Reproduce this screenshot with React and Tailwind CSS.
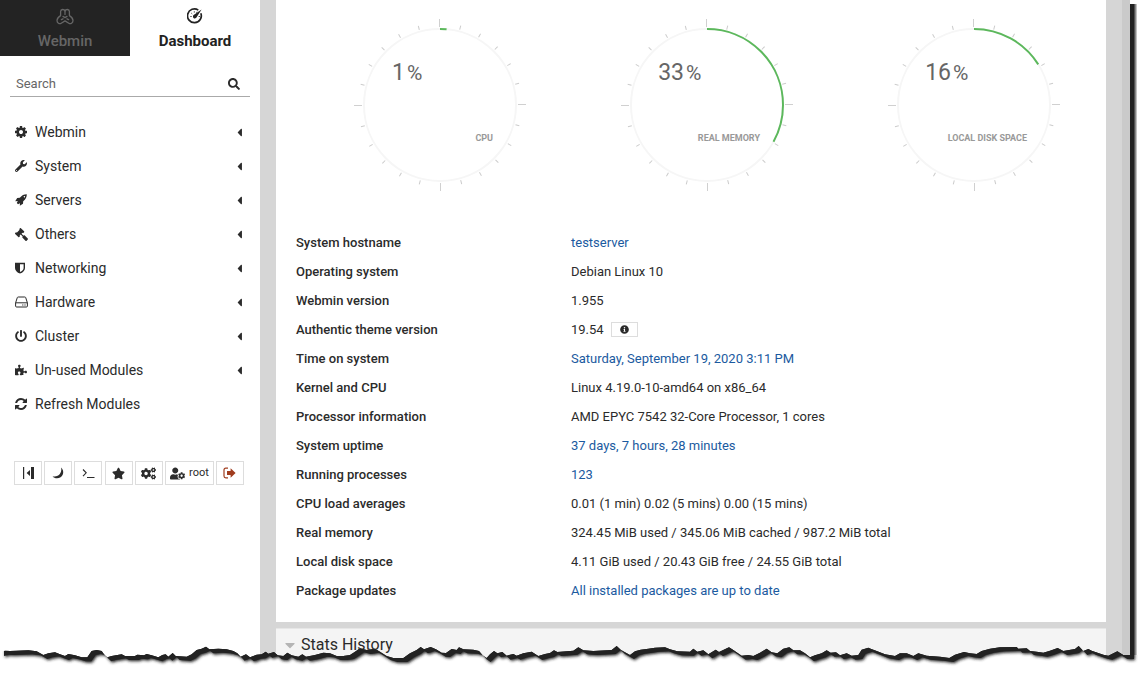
import React, { useState } from 'react';
import {
  FaCogs, FaWrench, FaPowerOff, FaPuzzlePiece, FaSearch, FaGavel,
  FaStar, FaUserCog, FaInfoCircle, FaCaretLeft, FaCaretDown,
} from 'react-icons/fa';

const menu = [
  { label: 'Webmin', icon: CogIcon },
  { label: 'System', icon: FaWrench },
  { label: 'Servers', icon: RocketIcon },
  { label: 'Others', icon: HammerIcon },
  { label: 'Networking', icon: ShieldIcon },
  { label: 'Hardware', icon: DriveIcon },
  { label: 'Cluster', icon: FaPowerOff },
  { label: 'Un-used Modules', icon: FaPuzzlePiece },
];

const info = [
  { label: 'System hostname', value: 'testserver', link: true },
  { label: 'Operating system', value: 'Debian Linux 10' },
  { label: 'Webmin version', value: '1.955' },
  { label: 'Authentic theme version', value: '19.54', details: true },
  { label: 'Time on system', value: 'Saturday, September 19, 2020 3:11 PM', link: true },
  { label: 'Kernel and CPU', value: 'Linux 4.19.0-10-amd64 on x86_64' },
  { label: 'Processor information', value: 'AMD EPYC 7542 32-Core Processor, 1 cores' },
  { label: 'System uptime', value: '37 days, 7 hours, 28 minutes', link: true },
  { label: 'Running processes', value: '123', link: true },
  { label: 'CPU load averages', value: '0.01 (1 min) 0.02 (5 mins) 0.00 (15 mins)' },
  { label: 'Real memory', value: '324.45 MiB used / 345.06 MiB cached / 987.2 MiB total' },
  { label: 'Local disk space', value: '4.11 GiB used / 20.43 GiB free / 24.55 GiB total' },
  { label: 'Package updates', value: 'All installed packages are up to date', link: true },
];

// outline of the ragged bottom edge of the page
const EDGE =
  '0,156 15,152 30,153 50,152 85,151 110,154 130,165 145,160 165,157 180,163 195,168 205,162 225,166 245,172 262,172 275,153 290,150 305,153 312,163 322,172 335,168 365,163 375,168 405,168 412,164 432,166 440,162 455,166 475,172 487,165 497,163 505,170 518,159 527,168 560,170 575,163 590,150 605,146 618,140 628,148 655,146 680,148 700,153 712,160 722,170 738,163 750,172 770,164 785,163 797,155 805,161 822,156 833,166 850,168 862,158 875,166 895,170 907,163 918,170 945,165 970,158 990,160 1010,168 1030,168 1050,165 1065,155 1080,145 1100,150 1125,146 ' +
  '1140,155 1160,168 1180,174 1210,174 1230,160 1250,150 1262,141 1272,148 1292,141 1308,148 1325,158 1338,159 1355,147 1370,150 1377,142 1390,148 1420,149 1437,153 1448,166 1460,174 1470,163 1482,153 1492,160 1507,156 1520,167 1540,162 1550,167 1570,160 1595,155 1615,168 1635,162 1650,159 1662,151 1672,156 1720,152 1735,142 1750,151 1780,153 1835,150 1850,138 1862,149 1875,157 1890,165 1905,154 1922,149 1945,146 1965,143 1995,142 2010,148 2032,154 2070,155 2080,146 2092,155 2110,151 2125,163 2147,149 2157,156 2187,142 2200,150 2225,167 2245,165 2260,168 ' +
  '2280,158 2300,146 2315,157 2332,160 2350,146 2368,142 2380,151 2400,151 2415,160 2430,172 2445,166 2465,160 2480,151 2492,158 2508,157 2520,166 2540,160 2555,167 2575,165 2585,149 2605,143 2612,146 2630,153 2655,163 2685,168 2700,160 2720,160 2740,168 2755,160 2780,167 2820,170 2848,174 2865,164 2892,156 2910,160 2930,162 2945,153 2970,146 3000,142 3050,141 3055,146 3080,145 3090,153 3110,155 3130,158 3150,152 3173,144 3190,153 3225,147 3236,138 3250,153 3265,147 3275,152 3310,164 3325,167 3352,154 3370,165 3390,165';

function WebminLogo() {
  return (
    <svg width="18" height="18" viewBox="0 0 18 18" fill="none" stroke="currentColor" strokeWidth="1.3" strokeLinejoin="round" strokeLinecap="round">
      <path d="M9 3C8.400 1 4.700 .8 4.600 3.600V7.600C2.600 8.800 1 10.200 1 12.400C1 15 3.400 16.400 5.200 15.200L9 12.900L12.800 15.200C14.600 16.400 17 15 17 12.400C17 10.200 15.400 8.800 13.400 7.600V3.600C13.300 .8 9.600 1 9 3Z" />
      <path d="M9 3V6.400M7 8.400L9 9.600L11 8.400M5.400 11.600L7 10.800M12.600 11.600L11 10.800" />
    </svg>
  );
}

function GaugeIcon() {
  return (
    <svg width="16" height="16" viewBox="0 0 16 16" fill="none" stroke="currentColor">
      <path d="M13.8 5.2A6.9 6.9 0 1 1 11.3 2.1" strokeWidth="1.7" />
      <path d="M14.6 1.6L9.6 9.2A1.9 1.9 0 1 1 7 6.8Z" fill="currentColor" stroke="none" />
      <path d="M3.4 8.5H4.6M4.4 5.2L5.2 5.9M7.3 3.4V4.5M10 3.8L9.6 4.7M11.7 8.5H12.8" strokeWidth="1" />
    </svg>
  );
}

function CogIcon() {
  return (
    <svg width="12" height="12" viewBox="0 128 1536 1536" fill="currentColor">
      <path d="M1024 896q0-106-75-181t-181-75-181 75-75 181 75 181 181 75 181-75 75-181zm512-109v222q0 12-8 23t-20 13l-185 28q-19 54-39 91 35 50 107 138 10 12 10 25t-9 23q-27 37-99 108t-94 71q-12 0-26-9l-138-108q-44 23-91 38-16 136-29 186-7 28-36 28H657q-14 0-24.500-8.500T621 1634l-28-184q-49-16-90-37l-141 107q-10 9-25 9-14 0-25-11-126-114-165-168-7-10-7-23 0-12 8-23 15-21 51-66.500t54-70.500q-27-50-41-99l-183-27q-13-2-21-12.500T0 1005V783q0-12 8-23t19-13l186-28q14-46 39-92-40-57-107-138-10-12-10-24 0-10 9-23 26-36 98.500-107.500T337 263q13 0 26 10l138 107q44-23 91-38 16-136 29-186 7-28 36-28h222q14 0 24.500 8.500T915 158l28 184q49 16 90 37l142-107q9-9 24-9 13 0 25 10 129 119 165 170 7 8 7 22 0 12-8 23-15 21-51 66.500t-54 70.500q26 50 41 98l183 28q13 2 21 12.500t8 23.500z" />
    </svg>
  );
}

function RocketIcon() {
  return (
    <svg width="12" height="12" viewBox="0 0 12 12" fill="currentColor">
      <path fillRule="evenodd" d="M11.800 .2C8.800 .2 7 1.200 4.800 3.800L2.200 4L.2 7.200L2.800 7L1.800 9L3 10.200L5 9.200L4.800 11.800L8 9.800L8.200 7.200C10.800 5 11.800 3.200 11.800 .2ZM9.400 1.900A.7 .7 0 1 1 9.390 1.900Z" />
    </svg>
  );
}

function HammerIcon() {
  return <FaGavel size={13} className="-scale-x-100" />;
}

function ShieldIcon() {
  return (
    <svg width="12" height="12" viewBox="0 0 12 12" fill="currentColor">
      <path fillRule="evenodd" d="M0 0.8H10V6C10 8.6 8 10.500 5 11.6C2 10.500 0 8.6 0 6ZM5 2.2V10C7.300 9 8.600 7.8 8.600 6V2.2Z" />
    </svg>
  );
}

function DriveIcon() {
  return (
    <svg width="13" height="12" viewBox="0 0 13 12" fill="none" stroke="currentColor">
      <path d="M.6 6.8L2.3 1.6Q2.5 1 3.2 1H9.8Q10.5 1 10.7 1.6L12.4 6.8V10Q12.4 11 11.4 11H1.6Q.6 11 .6 10ZM.6 6.8H12.4M7.2 9H8.4M9.4 9H10.6" />
    </svg>
  );
}

function RefreshIcon() {
  return (
    <svg width="12" height="12" viewBox="0 0 1536 1536" fill="currentColor">
      <path d="M1511 928q0 5-1 7-64 268-268 434.500T764 1536q-146 0-282.500-55T238 1324l-129 129q-19 19-45 19t-45-19-19-45V960q0-26 19-45t45-19h448q26 0 45 19t19 45-19 45l-137 137q71 66 161 102t187 36q134 0 250-65t186-179q11-17 53-117 8-23 30-23h192q13 0 22.500 9.500t9.500 22.500zm25-800v448q0 26-19 45t-45 19h-448q-26 0-45-19t-19-45 19-45l138-138Q969 256 768 256q-134 0-250 65T332 500q-11 17-53 117-8 23-30 23H50q-13 0-22.500-9.500T18 608v-7q65-268 270-434.500T768 0q146 0 284 55.500T1297 212l130-129q19-19 45-19t45 19 19 45z" />
    </svg>
  );
}

function CollapseIcon() {
  return (
    <svg width="13" height="12" viewBox="0 0 13 12" fill="currentColor">
      <path d="M1 0H2.2V12H1ZM9 0H12V12H9ZM8 3V9L4.6 6Z" />
    </svg>
  );
}

function TerminalIcon() {
  return (
    <svg width="13" height="12" viewBox="0 0 13 12" fill="none" stroke="currentColor" strokeWidth="1.1">
      <path d="M1 2.5L4.2 5.8L1 9.1M5 10.5H12.5" />
    </svg>
  );
}

function MoonIcon() {
  return (
    <svg width="12" height="12" viewBox="0 0 12 12" fill="currentColor">
      <path d="M9 .6C12.200 3.200 11.800 8 8.600 10.200C5.800 12 2.200 11.400 .6 9.200C3.600 9.800 6.400 9 8 6.800C9.400 4.800 9.600 2.600 9 .6Z" />
    </svg>
  );
}

function LogoutIcon() {
  return (
    <svg width="13" height="12" viewBox="0 0 13 12" fill="currentColor">
      <path d="M5 1.200H2.800Q1 1.200 1 3V9Q1 10.800 2.800 10.800H5" fill="none" stroke="currentColor" strokeWidth="1.200" />
      <path d="M4 4H7.600V1.200L12.600 6L7.600 10.800V8H4Z" />
    </svg>
  );
}

function Gauge({ value, arc = value, label, numberEnd }) {
  const r = 76;
  const circumference = 2 * Math.PI * r;
  const ticks = Array.from({ length: 24 }, (_, i) => i);
  return (
    <svg width="172" height="172" viewBox="-86 -86 172 172" role="img" aria-label={`${label} ${value}%`}>
      {ticks.map((i) => (
        <line
          key={i}
          x1="-0.5"
          x2="-0.5"
          y1={i % 6 === 0 ? -86 : -82}
          y2="-78"
          stroke={i % 6 === 0 ? '#d0d0d0' : '#cccccc'}
          transform={`rotate(${i * 15})`}
        />
      ))}
      <circle r={r} fill="none" stroke="#f6f6f6" strokeWidth="2" />
      <circle
        r={r}
        fill="none"
        stroke="#5cb85c"
        strokeWidth="2"
        strokeDasharray={`${(circumference * arc) / 100} ${circumference}`}
        transform="rotate(-90)"
      />
      <text x={numberEnd} y="-25" textAnchor="end" fontSize="23" fill="#666666">{value}</text>
      <text x={numberEnd + 2} y="-25" fontSize="21" fill="#666666">%</text>
      <text x="53" y="36" textAnchor="end" fontSize="9" fontWeight="700" fill="#999999">{label}</text>
    </svg>
  );
}

function ToolButton({ label, children }) {
  return (
    <button type="button" aria-label={label} className="flex h-6 min-w-7 items-center justify-center gap-1 border border-[#dddddd] bg-white px-1 text-[11px] hover:bg-gray-100">
      {children}
    </button>
  );
}

function Sidebar() {
  const [query, setQuery] = useState('');

  return (
    <aside className="w-[260px] shrink-0 bg-white">
      <div className="grid h-14 grid-cols-2 text-[15px] leading-6">
        <button type="button" className="flex flex-col items-center gap-[3px] bg-[#232323] pt-2 font-medium text-[#666666]">
          <WebminLogo />
          <span>Webmin</span>
        </button>
        <button type="button" className="flex flex-col items-center gap-[3px] pt-2 font-bold text-[#222222]">
          <span className="flex h-[18px] items-start"><GaugeIcon /></span>
          <span>Dashboard</span>
        </button>
      </div>

      <label className="mx-2.5 mt-4 flex h-[25px] items-center border-b border-[#aaaaaa] px-1.5">
        <input
          type="text"
          aria-label="Search"
          placeholder="Search"
          value={query}
          onChange={(e) => setQuery(e.target.value)}
          className="min-w-0 flex-1 text-[13px] outline-none placeholder:text-[#666666]"
        />
        <FaSearch size={12} className="mr-1" />
      </label>

      <nav className="mt-[18px]">
        {menu.map((item) => (
          <a key={item.label} href="#" className="flex h-[34px] items-center pr-3.5 pl-[15px] text-sm hover:bg-gray-100">
            <span className="w-5"><item.icon size={12} /></span>
            <span className="flex-1">{item.label}</span>
            <FaCaretLeft size={13} />
          </a>
        ))}
        <a href="#" className="flex h-[34px] items-center pr-3.5 pl-[15px] text-sm hover:bg-gray-100">
          <span className="w-5"><RefreshIcon /></span>
          <span>Refresh Modules</span>
        </a>
      </nav>

      <div className="mt-10 flex justify-between pr-4 pl-3.5">
        <ToolButton label="Collapse menu"><CollapseIcon /></ToolButton>
        <ToolButton label="Night mode"><MoonIcon /></ToolButton>
        <ToolButton label="Terminal"><TerminalIcon /></ToolButton>
        <ToolButton label="Favorites"><FaStar size={13} /></ToolButton>
        <ToolButton label="Theme settings"><FaCogs size={15} /></ToolButton>
        <ToolButton label="User root"><FaUserCog size={15} /><span>root</span></ToolButton>
        <ToolButton label="Log out"><span className="text-[#a03c1e]"><LogoutIcon /></span></ToolButton>
      </div>
    </aside>
  );
}

export default function App() {
  return (
    <div className="relative flex min-h-screen overflow-hidden bg-white font-[Roboto,sans-serif] text-[#2b2b2b]">
      <Sidebar />

      <main className="flex min-w-0 flex-1 flex-col bg-[#d6d6d6] px-4">
        {/* System information */}
        <section className="bg-white pb-[17px]">
          <div className="flex justify-between pt-[19px] pr-[46px] pl-[78px]">
            <Gauge value={1} arc={1.4} label="CPU" numberEnd={-35} />
            <Gauge value={33} label="REAL MEMORY" numberEnd={-23} />
            <Gauge value={16} label="LOCAL DISK SPACE" numberEnd={-23} />
          </div>

          <table className="mt-[37px] w-full text-[13px]">
            <tbody>
              {info.map((row) => (
                <tr key={row.label} className="h-[29px]">
                  <th scope="row" className="w-[295px] pl-5 text-left font-medium">{row.label}</th>
                  <td>
                    <div className="flex items-center gap-[7px]">
                      {row.link ? (
                        <a href="#" className="text-[#1b5aa0] hover:underline">{row.value}</a>
                      ) : (
                        <span>{row.value}</span>
                      )}
                      {row.details && (
                        <button type="button" aria-label="Theme details" className="flex h-[15px] w-[27px] items-center justify-center border border-[#dddddd]">
                          <FaInfoCircle size={9} />
                        </button>
                      )}
                    </div>
                  </td>
                </tr>
              ))}
            </tbody>
          </table>
        </section>

        {/* Stats History */}
        <section className="mt-1.5 flex-1 border-t border-[#e6e6e6] bg-[#f4f4f4]">
          <button type="button" className="flex h-8 items-center gap-[3px] pl-1.5 text-base">
            <FaCaretDown size={16} className="text-[#b5b5b5]" />
            <span>Stats History</span>
          </button>
        </section>
      </main>

      {/* Scroll track and the shadow at the right of the page */}
      <div className="w-2 shrink-0 bg-[#cacaca]" />
      <div className="w-2.5 shrink-0 pt-1">
        <div className="h-full bg-linear-to-r from-[#222222] from-35% to-white to-75%" />
      </div>

      {/* Torn bottom edge */}
      <svg className="pointer-events-none absolute inset-x-0 bottom-0 h-[92px] w-full" viewBox="0 0 3420 276" preserveAspectRatio="none" aria-hidden="true">
        <defs>
          <clipPath id="below">
            <polygon points={`${EDGE} 3420,165 3420,276 0,276`} />
          </clipPath>
          <filter id="soft" x="-5%" y="-20%" width="110%" height="140%">
            <feGaussianBlur stdDeviation="4" />
          </filter>
        </defs>
        <g clipPath="url(#below)">
          <rect width="3420" height="276" fill="white" />
          <polygon points={`${EDGE} 3390,-60 0,-60`} fill="#222222" transform="translate(15 16)" filter="url(#soft)" />
          <polygon points={`${EDGE} 3390,-60 0,-60`} fill="#222222" transform="translate(12 12)" />
        </g>
      </svg>
    </div>
  );
}
